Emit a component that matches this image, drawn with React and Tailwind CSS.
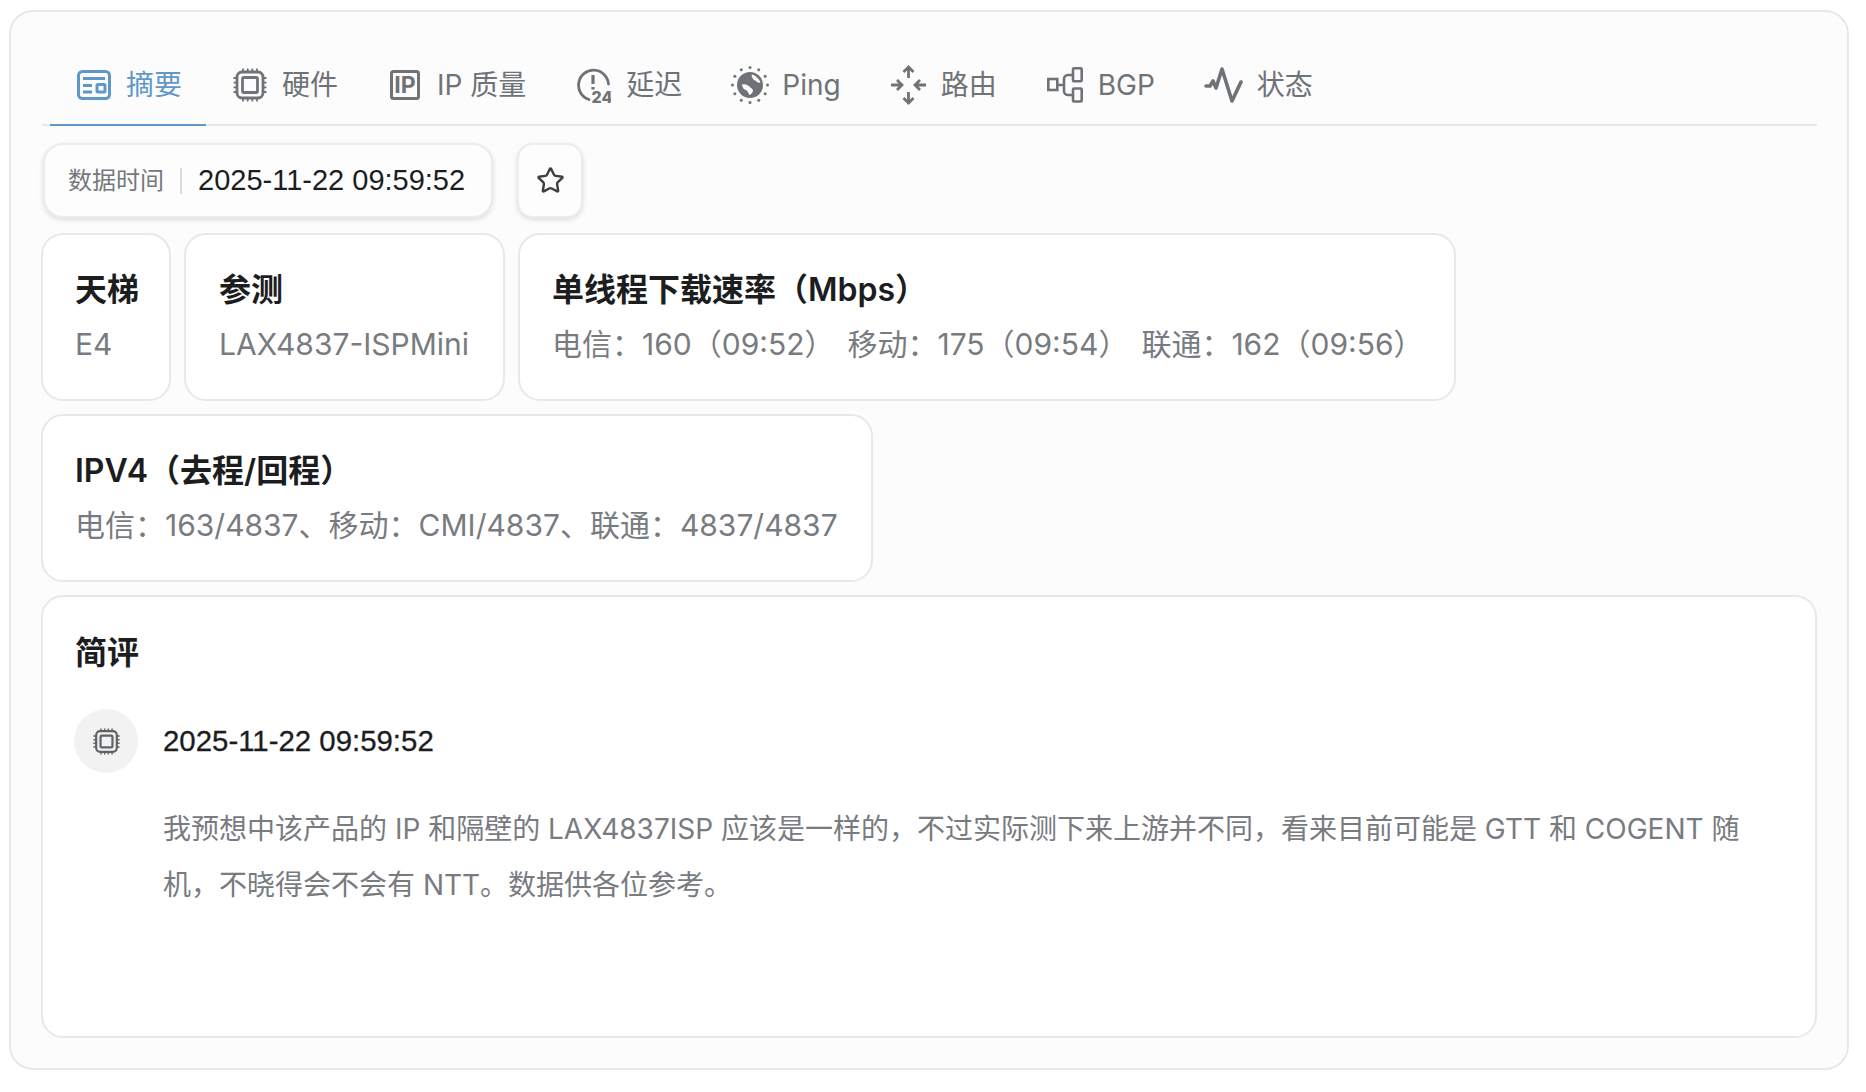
import React from 'react';
import { Star } from 'lucide-react';

const FONT = 'font-["Inter","Noto_Sans_CJK_SC",sans-serif]';
const DATE_FONT = 'font-["Liberation_Sans",sans-serif]';

function SummaryIcon() {
  return (
    <svg viewBox="0 0 34 30" className="w-[34px] h-[30px]" fill="none" stroke="currentColor" strokeWidth="3">
      <rect x="1.500" y="1.500" width="31" height="27" rx="4" />
      <path d="M6 8.500h22M6 15.500h9M6 22h9" />
      <rect x="20" y="14.500" width="8" height="7.500" rx="1" />
    </svg>
  );
}

function ChipIcon({ className = 'w-[34px] h-[34px]' }) {
  return (
    <svg viewBox="0 0 34 34" className={className} fill="none" stroke="currentColor" strokeWidth="2.800">
      <rect x="4" y="4" width="26" height="26" rx="5" />
      <rect x="9.500" y="9.500" width="15" height="15" rx="1.500" />
      <path d="M10 0.500v3M14.700 0.500v3M19.300 0.500v3M24 0.500v3M10 30.500v3M14.700 30.500v3M19.300 30.500v3M24 30.500v3M0.500 10h3M0.500 14.700h3M0.500 19.300h3M0.500 24h3M30.500 10h3M30.500 14.700h3M30.500 19.300h3M30.500 24h3" strokeWidth="1.800" />
    </svg>
  );
}

function IpIcon() {
  return (
    <svg viewBox="0 0 30 30" className="w-[30px] h-[30px]" fill="none" stroke="currentColor" strokeWidth="3">
      <rect x="1.500" y="1.500" width="27" height="27" rx="2" />
      <text x="15" y="23" textAnchor="middle" fontSize="23" fontWeight="700" fontFamily="Inter, sans-serif" fill="currentColor" stroke="none">IP</text>
    </svg>
  );
}

function DelayIcon() {
  return (
    <svg viewBox="0 0 34 36" className="w-[34px] h-[36px]" fill="none" stroke="currentColor" strokeWidth="2.800">
      <path d="M12 32.500A15 15 0 1 1 31.500 17" strokeLinecap="round" />
      <path d="M16 8v9M16 20v2.500" strokeWidth="3.200" />
      <text x="25" y="35.500" textAnchor="middle" fontSize="16" fontWeight="800" fontFamily="Inter, sans-serif" fill="currentColor" stroke="none">24</text>
    </svg>
  );
}

function PingIcon() {
  const dots = [];
  for (let i = 0; i < 12; i++) {
    const a = (i * Math.PI) / 6;
    dots.push(<circle key={i} cx={19 + 17.500 * Math.cos(a)} cy={19 + 17.500 * Math.sin(a)} r="1.500" fill="currentColor" />);
  }
  return (
    <svg viewBox="0 0 38 38" className="w-[38px] h-[38px]">
      {dots}
      <circle cx="19" cy="19" r="13" fill="currentColor" />
      <path d="M21 8.500c3.500 1 7 4 8.500 8-2 .5-4-.5-5-2-1.500 0-3-1.500-3-3-1 0-1-2-.5-3ZM11 18.500c3-1 6 .5 8 2.500 1 1.500 2.500 1.500 3 3.500 0 2-2 3.500-3.500 4.500-1.500-2-1.500-4-3.500-5-2 0-3.500-2.500-4-5.500Z" fill="#fcfcfc" />
    </svg>
  );
}

function RouteIcon() {
  return (
    <svg viewBox="0 0 37 40" className="w-[37px] h-[40px]" fill="none" stroke="currentColor" strokeWidth="2.800">
      <path d="M18.500 2v11M13.500 7l5-5 5 5M18.500 27v11M13.500 33l5 5 5-5" />
      <path d="M1 20h11M7 15l5 5-5 5M36 20H25M30 15l-5 5 5 5" />
    </svg>
  );
}

function BgpIcon() {
  return (
    <svg viewBox="0 0 36 36" className="w-[36px] h-[36px]" fill="none" stroke="currentColor" strokeWidth="2.600">
      <rect x="1.300" y="12" width="9" height="11" />
      <rect x="26" y="1.300" width="8.700" height="13" rx="1" />
      <rect x="26" y="21.500" width="8.700" height="13" rx="1" />
      <path d="M10 18h7M26 8h-5a4 4 0 0 0-4 4v12a4 4 0 0 0 4 4h5" />
    </svg>
  );
}

function StatusIcon() {
  return (
    <svg viewBox="0 0 40 36" className="w-[40px] h-[36px]" fill="none" stroke="currentColor" strokeWidth="3.600" strokeLinejoin="round" strokeLinecap="round">
      <path d="M2 19h4l3-5 3 7 6-19 10 32 9-19" />
    </svg>
  );
}

const tabs = [
  { label: '摘要', icon: <SummaryIcon />, box: 'gap-[15px] pl-[27px] pr-[24px]', active: true },
  { label: '硬件', icon: <ChipIcon />, box: 'gap-[15px] pl-[27px] pr-[27px]' },
  { label: 'IP 质量', icon: <IpIcon />, box: 'gap-[17px] pl-[25px] pr-[26px]' },
  { label: '延迟', icon: <DelayIcon />, box: 'gap-[15px] pl-[25px] pr-[24px]' },
  { label: 'Ping', icon: <PingIcon />, box: 'gap-[13px] pl-[25px] pr-[24px]' },
  { label: '路由', icon: <RouteIcon />, box: 'gap-[14px] px-[25px]' },
  { label: 'BGP', icon: <BgpIcon />, box: 'gap-[15px] pl-[25px] pr-[24px]' },
  { label: '状态', icon: <StatusIcon />, box: 'gap-[13px] px-[25px]' },
];

function InfoCard({ title, children, padding = 'px-[32px]' }) {
  return (
    <div className={`h-[168px] rounded-[22px] border-2 border-[#e8e8e8] bg-white pt-[29px] ${padding}`}>
      <div className="text-[32px] leading-[52px] font-semibold text-[#1c1d1f] whitespace-nowrap">{title}</div>
      <div className="text-[30px] leading-[56px] text-[#787b7f] whitespace-nowrap">{children}</div>
    </div>
  );
}

export default function App() {
  return (
    <div className={`${FONT} bg-white h-[1092px] pt-[10px] pb-[22px] pl-[9px] pr-[17px]`}>
      <div className="h-[1060px] rounded-[24px] border-2 border-[#e8e8e8] bg-[#fcfcfc] pl-[30px] pr-[30px]">
        <div className="flex border-b-2 border-[#e8e8e8] h-[114px] ml-[1px] pl-[8px] pt-[34px]">
          {tabs.map((t) => (
            <div
              key={t.label}
              className={`h-[80px] -mb-[2px] flex items-center text-[28px] whitespace-nowrap border-b-2 ${t.box} ${t.active ? 'text-[#5f98c8] border-b-[#5f98c8]' : 'text-[#6f7377] border-transparent'}`}
            >
              {t.icon}
              <span>{t.label}</span>
            </div>
          ))}
        </div>

        <div className="flex gap-[24px] mt-[17px] ml-[2px]">
          <div className="h-[75px] w-[450px] flex items-center rounded-[20px] bg-[#fdfdfd] border-2 border-[#ececec] shadow-[0_2px_5px_rgba(0,0,0,0.12)] pl-[23px] whitespace-nowrap">
            <span className="text-[24px] text-[#75787c]">数据时间</span>
            <span className="w-[2px] h-[26px] bg-[#dcdcdc] mx-[16px]" />
            <span className={`${DATE_FONT} text-[29px] text-[#1c1d1f]`}>2025-11-22 09:59:52</span>
          </div>
          <div className="h-[75px] w-[66px] flex items-center justify-center rounded-[16px] bg-[#fdfdfd] border-2 border-[#ececec] shadow-[0_2px_5px_rgba(0,0,0,0.12)] text-[#3c3f42]">
            <Star size={29} strokeWidth={2} />
          </div>
        </div>

        <div className="flex gap-[13px] mt-[15px]">
          <InfoCard title="天梯" padding="pl-[32px] pr-[30px]">E4</InfoCard>
          <InfoCard title="参测" padding="pl-[33px] pr-[34px]">LAX4837-ISPMini</InfoCard>
          <InfoCard title="单线程下载速率（Mbps）" padding="pl-[32px] pr-[30px]">
            电信：160（09:52）<span className="inline-block w-[13px]" />移动：175（09:54）<span className="inline-block w-[13px]" />联通：162（09:56）
          </InfoCard>
        </div>

        <div className="flex mt-[13px]">
          <InfoCard title="IPV4（去程/回程）" padding="pl-[32px] pr-[33px]">电信：163/4837、移动：CMI/4837、联通：4837/4837</InfoCard>
        </div>

        <div className="mt-[13px] h-[443px] rounded-[22px] border-2 border-[#e8e8e8] bg-white px-[32px] pt-[30px]">
          <div className="text-[32px] leading-[52px] font-semibold text-[#1c1d1f]">简评</div>
          <div className="flex items-center gap-[25px] mt-[30px] -ml-[1px]">
            <div className="w-[64px] h-[64px] rounded-full bg-[#f2f2f2] flex items-center justify-center text-[#606366]">
              <ChipIcon className="w-[27px] h-[27px]" />
            </div>
            <div className={`${DATE_FONT} text-[29.400px] [-webkit-text-stroke:0.3px_#1c1d1f] text-[#1c1d1f]`}>2025-11-22 09:59:52</div>
          </div>
          <p className="ml-[88px] mt-[28px] mr-[30px] text-[28px] leading-[56px] text-[#787b7f]">
            我预想中该产品的 IP 和隔壁的 LAX4837ISP 应该是一样的，不过实际测下来上游并不同，看来目前可能是 GTT 和 COGENT 随机，不晓得会不会有 NTT。数据供各位参考。
          </p>
        </div>
      </div>
    </div>
  );
}
